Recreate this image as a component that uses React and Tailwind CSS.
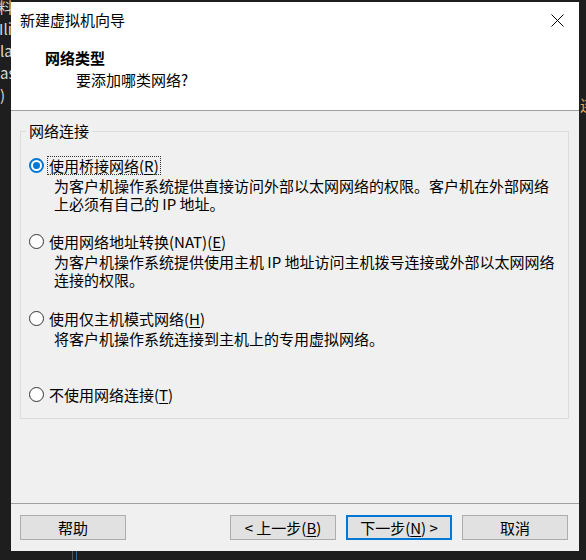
import React from "react";

function Radio({ checked }) {
  if (checked) {
    return (
      <span className="w-[15px] h-[15px] shrink-0 rounded-full border-2 border-[#0078d7] bg-white flex items-center justify-center">
        <span className="w-[7px] h-[7px] rounded-full bg-[#0078d7]" />
      </span>
    );
  }
  return <span className="w-[15px] h-[15px] shrink-0 rounded-full border border-[#333333] bg-white" />;
}

function Option({ checked, label, hotkey, children, className = "" }) {
  return (
    <div className={className}>
      <div className="flex items-center h-[18px] pl-[8px]">
        <Radio checked={checked} />
        <span
          className={
            "ml-[3px] px-[1px] leading-[17px] border border-dotted " +
            (checked ? "border-[#333333]" : "border-transparent")
          }
        >
          {label}(<span className="underline underline-offset-2">{hotkey}</span>)
        </span>
      </div>
      {children && <div className="mt-[3px] pl-[33px] leading-[18px] whitespace-nowrap">{children}</div>}
    </div>
  );
}

function Button({ children, primary }) {
  return (
    <button
      className={
        "w-[106px] h-[25px] bg-[#e1e1e1] text-[15px] leading-none text-black flex items-center justify-center " +
        (primary ? "border-2 border-[#0078d7]" : "border border-[#adadad]")
      }
    >
      {children}
    </button>
  );
}

export default function App() {
  return (
    <div className="w-[586px] h-[560px] bg-[#1e1e1e] relative overflow-hidden font-['Noto_Sans_CJK_SC',sans-serif] text-[15px] text-black">
      {/* background fragments of other windows */}
      <div className="absolute left-0 top-0 w-[11px] overflow-hidden text-[#d8d8d8] text-[15px] leading-[22px] whitespace-nowrap">
        <div className="-ml-[2px] -mt-[4px]">料</div>
        <div className="-ml-[1px]">Ili</div>
        <div>la</div>
        <div>as</div>
        <div>)</div>
      </div>
      <div className="absolute left-[580px] top-[96px] text-[15px] leading-[18px] text-[#e0b060] whitespace-nowrap">连</div>
      <div className="absolute left-[72px] top-[551px] w-[1px] h-[9px] bg-[#555555]" />
      <div className="absolute left-[76px] top-[551px] w-[1px] h-[9px] bg-[#2a6a9a]" />

      <div className="absolute left-[11px] top-[2px] w-[568px] h-[549px] bg-[#f0f0f0] flex flex-col">
        {/* header */}
        <div className="h-[108px] bg-white relative">
          <div className="pt-[9px] pl-[9px] leading-[18px]">新建虚拟机向导</div>
          <svg className="absolute right-[15px] top-[12px]" width="13" height="13" viewBox="0 0 13 13">
            <path d="M0.5 0.5 L12.5 12.5 M12.5 0.5 L0.5 12.5" stroke="#000" strokeWidth="1" />
          </svg>
          <div className="mt-[20px] pl-[34px] font-bold leading-[18px]">网络类型</div>
          <div className="mt-[4px] pl-[65px] leading-[18px]">要添加哪类网络?</div>
        </div>
        <div className="h-[1px] bg-[#a0a0a0]" />

        {/* body */}
        <div className="flex-1 pt-[11px] pl-[9px] pr-[10px]">
          <fieldset className="border border-[#dcdcdc] pb-[15px]">
            <legend className="ml-[5px] px-[3px] leading-[18px]">网络连接</legend>
            <Option checked label="使用桥接网络" hotkey="R" className="mt-[16px]">
              为客户机操作系统提供直接访问外部以太网网络的权限。客户机在外部网络
              <br />
              上必须有自己的 IP 地址。
            </Option>
            <Option label="使用网络地址转换(NAT)" hotkey="E" className="mt-[19px]">
              为客户机操作系统提供使用主机 IP 地址访问主机拨号连接或外部以太网网络
              <br />
              连接的权限。
            </Option>
            <Option label="使用仅主机模式网络" hotkey="H" className="mt-[20px]">
              将客户机操作系统连接到主机上的专用虚拟网络。
            </Option>
            <Option label="不使用网络连接" hotkey="T" className="mt-[37px]" />
          </fieldset>
        </div>

        {/* footer */}
        <div className="h-[1px] bg-[#a0a0a0]" />
        <div className="flex items-center pt-[11px] pb-[11px] pl-[9px] pr-[11px]">
          <Button>帮助</Button>
          <div className="flex-1" />
          <div className="flex gap-[10px]">
            <Button>
              &lt; 上一步(<span className="underline underline-offset-2">B</span>)
            </Button>
            <Button primary>
              下一步(<span className="underline underline-offset-2">N</span>) &gt;
            </Button>
            <Button>取消</Button>
          </div>
        </div>
      </div>
    </div>
  );
}
